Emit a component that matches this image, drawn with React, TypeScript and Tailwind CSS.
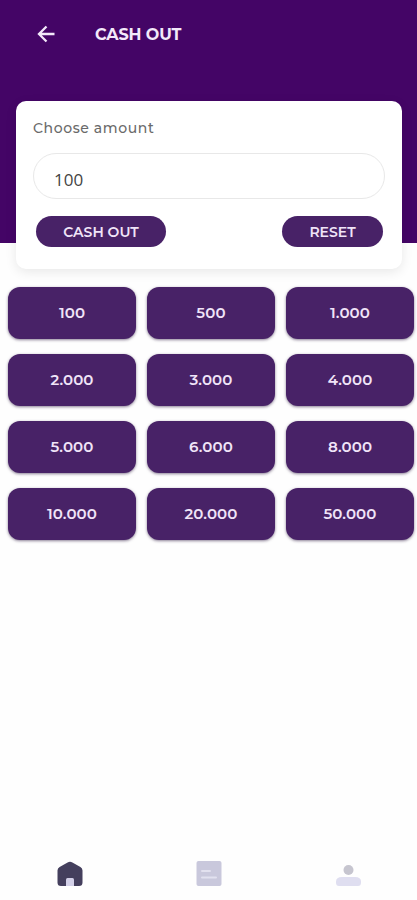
import { useState } from 'react';

const AMOUNTS = [
  '100', '500', '1.000',
  '2.000', '3.000', '4.000',
  '5.000', '6.000', '8.000',
  '10.000', '20.000', '50.000',
];

function BackIcon() {
  return (
    <svg width="18" height="18" viewBox="0 0 18 18" fill="none" stroke="#f3e9fa" strokeWidth="2.3" strokeLinejoin="miter">
      <path d="M17.5 9H2M9.5 1.5L2 9L9.5 16.5" />
    </svg>
  );
}

function HomeIcon() {
  return (
    <svg width="26" height="26" viewBox="0 0 26 26">
      <path d="M0.5 9.5Q0.5 7.2 2.6 6.1L10.6 1.4Q13 0.1 15.4 1.4L23.4 6.1Q25.5 7.2 25.5 9.5V21.5Q25.5 25 22 25H4Q0.5 25 0.5 21.5Z" fill="#443f5d" />
      <path d="M9 25V18.5Q9 17 10.5 17H15.5Q17 17 17 18.5V25Z" fill="#d3d0e8" />
    </svg>
  );
}

function HistoryIcon() {
  return (
    <svg width="26" height="26" viewBox="0 0 26 26">
      <rect x="0.5" y="0" width="25" height="25" rx="2" fill="#c9c8dc" />
      <path d="M6 10H14M6 16.5H20" stroke="#e2e1ef" strokeWidth="2" strokeLinecap="round" />
    </svg>
  );
}

function ProfileIcon() {
  return (
    <svg width="26" height="24" viewBox="0 0 26 24">
      <circle cx="13.5" cy="8" r="5" fill="#c6c5cf" />
      <path d="M1 19.5Q1 15 7 15H20Q26 15 26 19.5V20.5Q26 24 23 24H4Q1 24 1 20.5Z" fill="#dfdef0" />
    </svg>
  );
}

export default function App() {
  const [amount, setAmount] = useState('100');

  return (
    <div className="flex flex-col h-[900px] bg-[#fefefe] font-['Montserrat','Inter',sans-serif] overflow-hidden">
      {/* Header */}
      <header className="h-[243px] shrink-0 bg-[#440566]">
        <div className="flex items-center h-[68px] pl-[37px]">
          <button aria-label="Back">
            <BackIcon />
          </button>
          <h1 className="ml-10 pt-[2px] text-[16px] leading-5 font-bold tracking-[-0.1px] text-[#f3e9fa]">CASH OUT</h1>
        </div>
      </header>

      {/* Amount card */}
      <section className="relative -mt-[142px] ml-4 mr-[15px] h-[168px] shrink-0 rounded-[10px] bg-white px-[17px] pt-[17px] shadow-[0_3px_12px_rgba(0,0,0,0.09)]">
        <label htmlFor="amount" className="block text-[14px] leading-5 font-medium tracking-[0.6px] text-[#6a6a6a]">
          Choose amount
        </label>
        <input
          id="amount"
          value={amount}
          onChange={(e) => setAmount(e.target.value)}
          className="mt-[15px] block w-full h-[46px] rounded-full border border-[#e8e8e8] px-5 pt-[6px] font-['Open_Sans',sans-serif] text-[17px] text-[#444444] outline-none"
        />
        <div className="mt-[17px] pl-[3px] pr-[2px] flex justify-between">
          <button className="w-[130px] h-[31px] rounded-full bg-[#482267] pt-px text-[14px] font-semibold text-[#f0e4f8]">
            CASH OUT
          </button>
          <button
            onClick={() => setAmount('')}
            className="w-[101px] h-[31px] rounded-full bg-[#482267] pt-px text-[14px] font-semibold text-[#f0e4f8]"
          >
            RESET
          </button>
        </div>
      </section>

      {/* Preset amounts */}
      <div className="mt-[18px] pl-2 pr-[3px] grid grid-cols-3 gap-x-[11px] gap-y-[15px]">
        {AMOUNTS.map((value) => (
          <button
            key={value}
            onClick={() => setAmount(value.replace('.', ''))}
            className="h-[52px] rounded-xl bg-[#482267] text-[15px] font-semibold tracking-[0.1px] text-[#f0e4f8] shadow-[0_1px_3px_rgba(40,20,60,0.55)]"
          >
            {value}
          </button>
        ))}
      </div>

      {/* Bottom navigation */}
      <nav className="mt-auto h-[53px] grid grid-cols-3 items-center justify-items-center">
        <button aria-label="Home"><HomeIcon /></button>
        <button aria-label="History"><HistoryIcon /></button>
        <button aria-label="Profile"><ProfileIcon /></button>
      </nav>
    </div>
  );
}
